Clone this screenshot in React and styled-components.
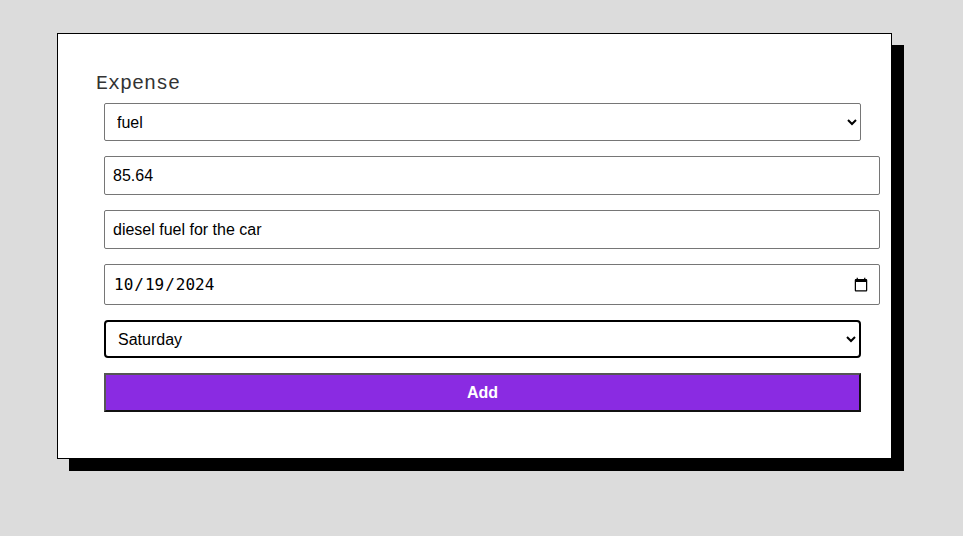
import React from 'react'
import styled, { createGlobalStyle } from 'styled-components'

const Global = createGlobalStyle`
  html, body {
    margin: 0;
    background: #dcdcdc;
  }
  body {
    font-family: "Liberation Sans", Arial, sans-serif;
  }
`

const Page = styled.div`
  padding: 33px 0 0 57px;
  min-height: 536px;
  box-sizing: border-box;
`

const Card = styled.div`
  width: 835px;
  height: 426px;
  box-sizing: border-box;
  background: #fff;
  border: 1px solid #000;
  box-shadow: 12px 12px 0 #000;
  padding: 38px 29px 0 38px;
`

const Title = styled.h2`
  margin: 0 0 8px 0;
  font-family: "Liberation Mono", "Courier New", monospace;
  font-weight: normal;
  font-size: 20px;
  line-height: 23px;
  color: #333;
`

const Form = styled.form`
  margin-left: 8px;
  width: 757px;
  display: flex;
  flex-direction: column;
  gap: 15px;
`

const Select = styled.select`
  width: 757px;
  height: 38px;
  box-sizing: border-box;
  font-family: "Liberation Sans", Arial, sans-serif;
  font-size: 16px;
  color: #000;
  background: #fff;
  padding: 0 8px;
  border: ${p => (p.$active ? '2px solid #000' : '1px solid #767676')};
  border-radius: ${p => (p.$active ? '4px' : '2px')};
  outline: none;
`

const Input = styled.input`
  width: 776px;
  height: ${p => (p.$tall ? '41px' : '39px')};
  box-sizing: border-box;
  font-family: ${p => (p.$mono ? '"DejaVu Sans Mono", "Liberation Mono", monospace' : '"Liberation Sans", Arial, sans-serif')};
  font-size: 16px;
  color: #000;
  background: #fff;
  padding: 0 8px;
  border: 1px solid #767676;
  border-radius: 2px;
  outline: none;
`

const Button = styled.button`
  width: 757px;
  height: 39px;
  background: #8a2be2;
  color: #fff;
  font-family: "Liberation Sans", Arial, sans-serif;
  font-size: 16px;
  font-weight: bold;
  border-style: solid;
  border-width: 2px;
  border-color: #555 #111 #111 #555;
  cursor: pointer;
`

const App = () => {
  return (
    <Page>
      <Global />
      <Card>
        <Title>Expense</Title>
        <Form onSubmit={e => e.preventDefault()}>
          <Select defaultValue="fuel">
            <option value="fuel">fuel</option>
            <option value="food">food</option>
            <option value="rent">rent</option>
          </Select>
          <Input type="number" defaultValue="85.64" step="0.01" />
          <Input type="text" defaultValue="diesel fuel for the car" />
          <Input type="date" defaultValue="2024-10-19" $mono $tall />
          <Select defaultValue="Saturday" $active>
            <option>Monday</option>
            <option>Tuesday</option>
            <option>Wednesday</option>
            <option>Thursday</option>
            <option>Friday</option>
            <option>Saturday</option>
            <option>Sunday</option>
          </Select>
          <Button type="submit">Add</Button>
        </Form>
      </Card>
    </Page>
  )
}

export default App
